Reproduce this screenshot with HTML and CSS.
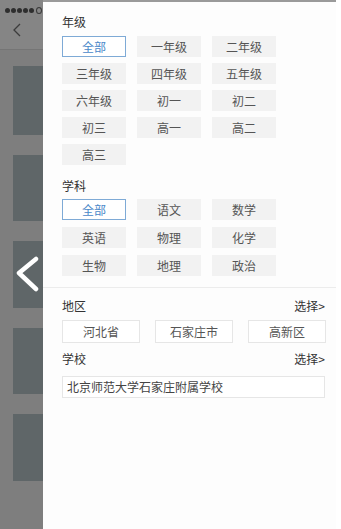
FILE: index.html
```html
<!DOCTYPE html>
<html lang="zh">
<head>
<meta charset="utf-8">
<link rel="stylesheet" href="styles.css">
</head>
<body>
<div class="screen">
  <div class="backdrop">
    <div class="bd-head">
      <div class="dots"><span></span><span></span><span></span><span></span><span></span><i></i></div>
      <svg class="bd-back" width="10" height="14" viewBox="0 0 10 14"><path d="M8 1 L2 7 L8 13" fill="none" stroke="#3c3c3c" stroke-width="1.3"/></svg>
    </div>
    <div class="bd-list">
      <div class="bd-card c1"></div>
      <div class="bd-card c2"></div>
      <div class="bd-card c3"></div>
      <div class="bd-card c4"></div>
      <div class="bd-card c5"></div>
    </div>
    <svg class="close-chev" width="26" height="38" viewBox="0 0 26 38"><path d="M21 3 L4 17 L21 33" fill="none" stroke="#fff" stroke-width="4.5" stroke-linecap="round" stroke-linejoin="round"/></svg>
  </div>
  <div class="panel">
    <div class="title">年级</div>
    <div class="grid grade">
      <div class="chip active">全部</div>
      <div class="chip">一年级</div>
      <div class="chip">二年级</div>
      <div class="chip">三年级</div>
      <div class="chip">四年级</div>
      <div class="chip">五年级</div>
      <div class="chip">六年级</div>
      <div class="chip">初一</div>
      <div class="chip">初二</div>
      <div class="chip">初三</div>
      <div class="chip">高一</div>
      <div class="chip">高二</div>
      <div class="chip">高三</div>
    </div>
    <div class="title t2">学科</div>
    <div class="grid subject">
      <div class="chip active">全部</div>
      <div class="chip">语文</div>
      <div class="chip">数学</div>
      <div class="chip">英语</div>
      <div class="chip">物理</div>
      <div class="chip">化学</div>
      <div class="chip">生物</div>
      <div class="chip">地理</div>
      <div class="chip">政治</div>
    </div>
    <div class="divider"></div>
    <div class="row-head"><span>地区</span><span class="pick">选择&gt;</span></div>
    <div class="regions">
      <div class="box">河北省</div>
      <div class="box">石家庄市</div>
      <div class="box">高新区</div>
    </div>
    <div class="row-head r2"><span>学校</span><span class="pick">选择&gt;</span></div>
    <div class="school">北京师范大学石家庄附属学校</div>
  </div>
</div>
</body>
</html>
```
FILE: styles.css
```css
html, body {
  margin: 0;
  padding: 0;
  background: #fff;
}
body {
  width: 341px;
  height: 529px;
  overflow: hidden;
  font-family: "Noto Sans CJK SC", "Noto Sans", sans-serif;
}
.screen {
  display: flex;
  height: 529px;
}
.backdrop {
  position: relative;
  width: 43px;
  flex: none;
  background: #7e7e7e;
  overflow: hidden;
}
.bd-head {
  height: 50px;
  background: #858585;
  border-bottom: 1px solid #757575;
  box-sizing: border-box;
  padding: 7px 0 0 5px;
}
.dots {
  display: flex;
  gap: 1px;
  align-items: center;
  height: 6px;
}
.dots span {
  width: 5px;
  height: 5px;
  border-radius: 50%;
  background: #2e2e2e;
}
.dots i {
  width: 4px;
  height: 5px;
  border: 1px solid #3a3a3a;
  border-radius: 50%;
  margin-left: 1px;
}
.bd-back {
  display: block;
  margin: 10px 0 0 7px;
}
.bd-list {
  display: flex;
  flex-direction: column;
  padding: 16px 0 0 13px;
  gap: 20px;
}
.bd-card {
  height: 68px;
  background: #5f6668;
}
.bd-card.c1 { height: 69px; }
.bd-card.c2 { height: 66px; }
.bd-card.c3 { height: 67px; }
.bd-card.c4 { height: 66px; }
.bd-card.c5 { height: 67px; }
.close-chev {
  position: absolute;
  left: 15px;
  top: 256px;
}
.panel {
  width: 293px;
  flex: none;
  background: #fdfdfd;
  border-top: 2px solid #9a9a9a;
  box-sizing: border-box;
  padding: 12px 0 0 19px;
}
.title {
  font-size: 12px;
  line-height: 16px;
  color: #333;
  height: 16px;
}
.title.t2 {
  margin-top: 13px;
}
.grid {
  display: grid;
  grid-template-columns: repeat(3, 64px);
  column-gap: 11px;
  margin-top: 6px;
}
.grid.grade {
  grid-auto-rows: 21px;
  row-gap: 6px;
}
.grid.subject {
  grid-auto-rows: 21px;
  row-gap: 7px;
  margin-top: 5px;
}
.chip {
  background: #f2f2f2;
  color: #555;
  font-size: 12px;
  line-height: 21px;
  text-align: center;
}
.chip.active {
  background: #fff;
  border: 1px solid #7eaad6;
  box-sizing: border-box;
  line-height: 19px;
  color: #4a88c9;
}
.divider {
  height: 1px;
  background: #ececec;
  margin: 11px 0 0 -19px;
}
.row-head {
  display: flex;
  justify-content: space-between;
  width: 263px;
  font-size: 12px;
  line-height: 16px;
  color: #333;
  margin-top: 10px;
}
.row-head.r2 {
  margin-top: 8px;
}
.pick {
  color: #333;
}
.regions {
  display: flex;
  gap: 15px;
  margin-top: 6px;
}
.box {
  width: 78px;
  height: 23px;
  box-sizing: border-box;
  border: 1px solid #e6e6e6;
  background: #fff;
  color: #555;
  font-size: 12px;
  line-height: 21px;
  text-align: center;
}
.school {
  margin-top: 9px;
  width: 263px;
  height: 22px;
  box-sizing: border-box;
  border: 1px solid #e6e6e6;
  background: #fff;
  color: #444;
  font-size: 12px;
  line-height: 20px;
  padding-left: 4px;
}
```
